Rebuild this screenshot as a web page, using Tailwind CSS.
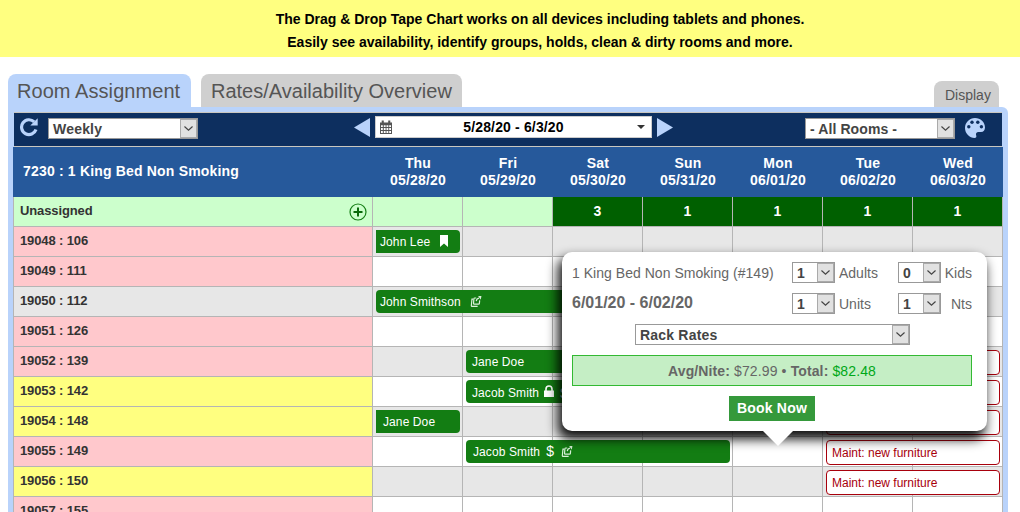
<!DOCTYPE html>
<html lang="en">
<head>
<meta charset="utf-8">
<title>Tape Chart</title>
<script src="https://cdn.jsdelivr.net/npm/@tailwindcss/browser@4"></script>
</head>
<body class="relative h-[512px] w-[1020px] overflow-hidden bg-white font-['Liberation_Sans',Arial,sans-serif] text-sm text-[#666]">

<svg class="hidden">
  <symbol id="chev" viewBox="0 0 15 19"><path d="M3 7.300 7.500 11.500l4.500-4.200" fill="none" stroke="#444" stroke-width="1.300"/></symbol>
  <symbol id="share" viewBox="0 0 12 12"><g fill="none" stroke="#d9f0d9" stroke-width="1.300"><path d="M3 3.500H1.600L.9 10.600q0 .7.700.7h6.200"/><path d="M6.200 2.200H4.600q-.8 0-.9.900l-.4 5q0 .8.800.8h4.700q.8 0 .9-.8l.3-3.300"/><path d="M6.300 5.600Q6.600 2.700 9.300 2.300"/></g><path d="M8.300 0h3.600l-.7 4.200z" fill="#d9f0d9"/></symbol>
</svg>

<header class="h-[57px] bg-[#ffff80] pl-[61px] pt-2 text-center font-bold leading-[23px] text-black">
  <p class="pr-px">The Drag &amp; Drop Tape Chart works on all devices including tablets and phones.</p>
  <p class="pr-px">Easily see availability, identify groups, holds, clean &amp; dirty rooms and more.</p>
</header>

<nav class="mt-[17px] flex h-[33px] items-end pl-2 text-[#555]">
  <div class="h-[33px] w-[183px] rounded-t-lg bg-[#b9d3fb] pl-[9px] text-xl leading-[34px] tracking-[.06px]">Room Assignment</div>
  <div class="ml-[10px] h-[33px] w-[261px] rounded-t-lg bg-[#cfcfcf] pl-[10px] text-xl leading-[34px]">Rates/Availability Overview</div>
  <div class="ml-auto mr-[21px] h-[26px] w-[65px] rounded-t-lg bg-[#cfcfcf] pl-[11px] leading-[28px]">Display</div>
</nav>

<main class="ml-2 h-[405px] w-[1000px] overflow-hidden rounded-tr-md bg-[#b9d3fb] pl-[5px] pr-[5px] pt-[5px]">
  <div class="ml-px flex h-[35px] w-[988px] border-y border-[#c9c7c0] bg-[#0d2f5f] font-bold text-[#444]">
    <svg class="ml-[5px] mt-[4px] h-5 w-5" viewBox="0 0 20 20"><path d="M17 12.500A7.400 7.400 0 1 1 15.200 4.900" fill="none" stroke="#b9d3fb" stroke-width="3.200"/><path d="M18.700 1.200v7.400h-7.400z" fill="#b9d3fb"/></svg>
    <div class="ml-[9px] mt-[5px] flex h-[21px] w-[150px] border border-[#999] bg-white">
      <span class="flex-1 pl-1 leading-[20px] tracking-[.2px]">Weekly</span>
      <svg class="h-[19px] w-[17px] border border-[#aaa] bg-[#e1e1e1]"><use href="#chev"/></svg>
    </div>
    <svg class="ml-[156px] mt-[5px] h-[19px] w-4" viewBox="0 0 16 19"><path d="M16 0v19L0 9.500z" fill="#b9d3fb"/></svg>
    <div class="ml-[5px] mt-[3px] flex h-[22px] w-[277px] items-center border border-[#ccc] bg-white text-black">
      <svg class="ml-1 h-[14px] w-[12px]" viewBox="0 0 12 14"><path fill="#555" d="M0 2.500h1.700V.5h2.100v2h4.400v-2h2.100v2H12V14H0z"/><path d="M1 5.300h1.800v1.700H1zM3.800 5.300h1.800v1.700H3.800zM6.500 5.300h1.800v1.700H6.500zM9.200 5.300H11v1.700H9.200zM1 8h1.800v2H1zM3.800 8h1.800v2H3.800zM6.500 8h1.800v2H6.500zM9.200 8H11v2H9.200zM1 11h1.800v2H1zM3.800 11h1.800v2H3.800zM6.500 11h1.800v2H6.500zM9.200 11H11v2H9.200z" fill="#fff"/></svg>
      <span class="flex-1 pr-[2px] text-center leading-5 tracking-[.15px]">5/28/20 - 6/3/20</span>
      <svg class="mr-[6px] h-1 w-2" viewBox="0 0 8 4"><path d="M0 0h8L4 4z" fill="#333"/></svg>
    </div>
    <svg class="ml-[5px] mt-[5px] h-[19px] w-4" viewBox="0 0 16 19"><path d="M0 0v19l16-9.500z" fill="#b9d3fb"/></svg>
    <div class="ml-[132px] mt-[5px] flex h-[21px] w-[150px] border border-[#999] bg-white">
      <span class="flex-1 pl-1 leading-[20px] tracking-[.1px]">- All Rooms -</span>
      <svg class="h-[19px] w-[17px] border border-[#aaa] bg-[#e1e1e1]"><use href="#chev"/></svg>
    </div>
    <svg class="ml-[10px] mt-[5px] h-5 w-5" viewBox="0 0 20 20"><path d="M10 0C4.500 0 0 4.500 0 10s4.500 10 9.500 10c1.700 0 2.200-1.200 1.700-2.500-.7-2 .3-3.500 2.300-3.500H16c2.500 0 4-1.800 4-4.500C20 4 15.500 0 10 0z" fill="#b9d3fb"/><g fill="#0d2f5f"><circle cx="3.800" cy="8.700" r="1.700"/><circle cx="7" cy="4.300" r="1.700"/><circle cx="12.800" cy="4.300" r="1.700"/><circle cx="16.400" cy="8.700" r="1.700"/></g></svg>
  </div>

  <div id="chart" class="relative w-[990px]">
    <div class="flex h-[50px] bg-[#26599b] font-bold tracking-[.18px] text-white">
      <div class="w-[360px] pl-[10px] leading-[49px]">7230 : 1 King Bed Non Smoking</div>
      <div class="grid w-[630px] grid-cols-7 pt-2 text-center leading-[17px]">
        <div>Thu<br>05/28/20</div><div>Fri<br>05/29/20</div><div>Sat<br>05/30/20</div><div>Sun<br>05/31/20</div><div>Mon<br>06/01/20</div><div>Tue<br>06/02/20</div><div>Wed<br>06/03/20</div>
      </div>
    </div>
    <div class="flex h-[30px] border-b border-l border-[#b5b5b5] bg-[#ccffcc] font-bold">
      <div class="flex w-[359px] items-center justify-between border-r border-[#b5b5b5] pl-[6px] pr-[5px] text-[13px] leading-7 tracking-[-.12px] text-[#333]"><span class="-mt-px">Unassigned</span>
        <svg class="h-[18px] w-[18px]" viewBox="0 0 18 18"><circle cx="9" cy="9" r="8" fill="none" stroke="#178017" stroke-width="1.200"/><path d="M9 4.500v9M4.500 9h9" stroke="#0a6a0a" stroke-width="2"/></svg>
      </div>
      <div class="grid w-[630px] grid-cols-7 text-center leading-7 text-white">
        <div class="border-r border-[#b5b5b5]"></div><div class="border-r border-[#b5b5b5]"></div>
        <div class="border-r border-[#b5b5b5] bg-[#006000]">3</div><div class="border-r border-[#b5b5b5] bg-[#006000]">1</div><div class="border-r border-[#b5b5b5] bg-[#006000]">1</div><div class="border-r border-[#b5b5b5] bg-[#006000]">1</div><div class="border-r border-[#b5b5b5] bg-[#006000]">1</div>
      </div>
    </div>
    <div id="rooms"></div>

    <!-- bookings laid over the calendar cells -->
    <div class="text-xs text-white">
      <div class="absolute left-[363px] top-[83px] flex h-[23px] w-[84px] items-center rounded-r bg-[#137d13] pl-1 tracking-[.1px]">John Lee<svg class="-mt-px ml-[10px] h-3 w-2" viewBox="0 0 8 12"><path d="M0 0h8v12L4 8.500 0 12z" fill="#fff"/></svg></div>
      <div class="absolute left-[363px] top-[143px] flex h-[23px] w-[280px] items-center rounded-l bg-[#137d13] pl-1 tracking-[.1px]">John Smithson<svg class="ml-[9px] h-[11px] w-3"><use href="#share"/></svg></div>
      <div class="absolute left-[453px] top-[203px] flex h-[23px] w-[170px] items-center rounded-l bg-[#137d13] pl-[6px] tracking-[.1px]">Jane Doe</div>
      <div class="absolute left-[453px] top-[233px] flex h-[23px] w-[170px] items-center rounded-l bg-[#137d13] pl-[6px] pt-[2px] tracking-[.1px]">Jacob Smith<svg class="-mt-[4px] ml-[5px] h-3 w-[10px]" viewBox="0 0 10 12"><path d="M2 6V4a3 3 0 0 1 6 0v2" fill="none" stroke="#fff" stroke-width="1.600"/><path d="M0 5.500h10V12H0z" fill="#fff"/></svg><span class="ml-[6px] text-sm">$</span></div>
      <div class="absolute left-[363px] top-[263px] flex h-[23px] w-[84px] items-center rounded-r bg-[#137d13] pl-[7px] tracking-[.1px]">Jane Doe</div>
      <div class="absolute left-[453px] top-[293px] flex h-[23px] w-[264px] items-center rounded bg-[#137d13] pl-[7px] tracking-[.1px]">Jacob Smith<span class="-mt-px ml-[6px] text-sm leading-5">$</span><svg class="ml-[7px] h-[11px] w-3"><use href="#share"/></svg></div>
    </div>
    <div class="absolute left-[813px] top-[203px] flex w-[174px] flex-col gap-[5px] text-xs leading-[25px] text-[#a8000c]">
      <div class="h-[25px] rounded border border-[#a8000c] bg-white"></div>
      <div class="h-[25px] rounded border border-[#a8000c] bg-white"></div>
      <div class="h-[25px] rounded border border-[#a8000c] bg-white"></div>
      <div class="h-[25px] rounded border border-[#a8000c] bg-white pl-[5px]">Maint: new furniture</div>
      <div class="h-[25px] rounded border border-[#a8000c] bg-white pl-[5px]">Maint: new furniture</div>
    </div>
  </div>
</main>

<!-- quick booking popup -->
<section class="absolute left-[562px] top-[252px] flex h-[179px] w-[425px] flex-col gap-[10px] rounded-[10px] bg-white py-[10px] pl-[10px] pr-[15px] shadow-[-3px_7px_12px_1px_rgba(0,0,0,.95)]">
  <div class="flex h-[21px] leading-[22px]">
    <span class="w-[220px] tracking-[.03px]">1 King Bed Non Smoking (#149)</span>
    <div class="flex w-[43px] border border-[#999] bg-white font-bold leading-5 text-[#444]"><span class="flex-1 pl-1">1</span><svg class="h-[19px] w-[17px] border border-[#aaa] bg-[#e1e1e1]"><use href="#chev"/></svg></div>
    <span class="ml-1 w-[59px]">Adults</span>
    <div class="flex w-[43px] border border-[#999] bg-white font-bold leading-5 text-[#444]"><span class="flex-1 pl-1">0</span><svg class="h-[19px] w-[17px] border border-[#aaa] bg-[#e1e1e1]"><use href="#chev"/></svg></div>
    <span class="flex-1 text-right">Kids</span>
  </div>
  <div class="flex h-[21px] leading-[22px]">
    <span class="w-[220px] text-base font-bold leading-5">6/01/20 - 6/02/20</span>
    <div class="flex w-[43px] border border-[#999] bg-white font-bold leading-5 text-[#444]"><span class="flex-1 pl-1">1</span><svg class="h-[19px] w-[17px] border border-[#aaa] bg-[#e1e1e1]"><use href="#chev"/></svg></div>
    <span class="ml-1 w-[59px]">Units</span>
    <div class="flex w-[43px] border border-[#999] bg-white font-bold leading-5 text-[#444]"><span class="flex-1 pl-1">1</span><svg class="h-[19px] w-[17px] border border-[#aaa] bg-[#e1e1e1]"><use href="#chev"/></svg></div>
    <span class="flex-1 text-right">Nts</span>
  </div>
  <div class="ml-[63px] flex h-[21px] w-[275px] border border-[#999] bg-white font-bold leading-5 tracking-[.2px] text-[#444]"><span class="flex-1 pl-1">Rack Rates</span><svg class="h-[19px] w-[17px] border border-[#aaa] bg-[#e1e1e1]"><use href="#chev"/></svg></div>
  <div class="h-[31px] border border-[#33b933] bg-[#c5eec5] text-center leading-[30px] tracking-[.12px]"><b>Avg/Nite:</b> $72.99 • <b>Total:</b> <span class="text-[#00a818]">$82.48</span></div>
  <button class="ml-[157px] h-[25px] w-[86px] bg-[#35993b] font-bold leading-[25px] tracking-[.2px] text-white">Book Now</button>
  <svg class="absolute left-[201px] top-[179px] h-4 w-[30px]" viewBox="0 0 30 16"><path d="M0 0h30L15 15z" fill="#fff"/></svg>
</section>

<script>
const rooms = [
  ['19048 : 106', 'bg-[#ffc8cc]'], ['19049 : 111', 'bg-[#ffc8cc]'], ['19050 : 112', 'bg-[#e7e7e7]'],
  ['19051 : 126', 'bg-[#ffc8cc]'], ['19052 : 139', 'bg-[#ffc8cc]'], ['19053 : 142', 'bg-[#ffff80]'],
  ['19054 : 148', 'bg-[#ffff80]'], ['19055 : 149', 'bg-[#ffc8cc]'], ['19056 : 150', 'bg-[#ffff80]'],
  ['19057 : 155', 'bg-[#ffc8cc]']
];
document.getElementById('rooms').innerHTML = rooms.map(([name, color], i) =>
  `<div class="flex h-[30px] border-b border-l border-[#b5b5b5] ${i % 2 ? 'bg-white' : 'bg-[#e7e7e7]'}">
    <div class="w-[359px] border-r border-[#b5b5b5] pl-[6px] text-[13px] font-bold leading-[27px] tracking-[-.12px] text-[#333] ${color}">${name}</div>
    <div class="grid w-[630px] grid-cols-7">${'<div class="border-r border-[#b5b5b5]"></div>'.repeat(7)}</div>
  </div>`).join('');
</script>
</body>
</html>
